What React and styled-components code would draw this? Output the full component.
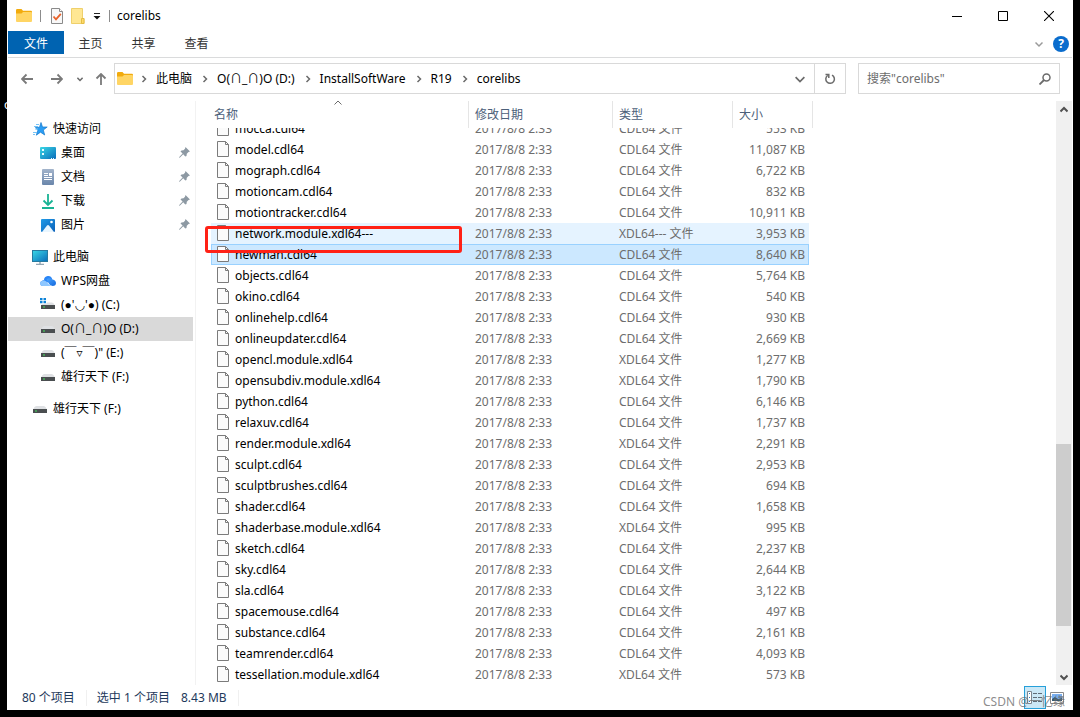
import React, { useLayoutEffect, useRef } from "react";
import styled, { createGlobalStyle, css } from "styled-components";

const files = [
  ["mocca.cdl64", "553 KB"],
  ["model.cdl64", "11,087 KB"],
  ["mograph.cdl64", "6,722 KB"],
  ["motioncam.cdl64", "832 KB"],
  ["motiontracker.cdl64", "10,911 KB"],
  ["network.module.xdl64---", "3,953 KB", "hover"],
  ["newman.cdl64", "8,640 KB", "selected"],
  ["objects.cdl64", "5,764 KB"],
  ["okino.cdl64", "540 KB"],
  ["onlinehelp.cdl64", "930 KB"],
  ["onlineupdater.cdl64", "2,669 KB"],
  ["opencl.module.xdl64", "1,277 KB"],
  ["opensubdiv.module.xdl64", "1,790 KB"],
  ["python.cdl64", "6,146 KB"],
  ["relaxuv.cdl64", "1,737 KB"],
  ["render.module.xdl64", "2,291 KB"],
  ["sculpt.cdl64", "2,953 KB"],
  ["sculptbrushes.cdl64", "694 KB"],
  ["shader.cdl64", "1,658 KB"],
  ["shaderbase.module.xdl64", "995 KB"],
  ["sketch.cdl64", "2,237 KB"],
  ["sky.cdl64", "2,644 KB"],
  ["sla.cdl64", "3,122 KB"],
  ["spacemouse.cdl64", "497 KB"],
  ["substance.cdl64", "2,161 KB"],
  ["teamrender.cdl64", "4,093 KB"],
  ["tessellation.module.xdl64", "573 KB"],
];

const fileType = (name) => `${name.split(".").pop().toUpperCase()} 文件`;

const FolderIcon = () => (
  <svg width="16" height="14" viewBox="0 0 16 14">
    <path d="M0 1.200Q0 0 1.200 0h4.300l1.500 1.800h8Q16 1.800 16 3v4H0z" fill="#f2ab0d" />
    <path d="M0 4.500h5.500L7 3h8q1 0 1 1v8q0 1-1 1H1q-1 0-1-1z" fill="#ffd564" />
  </svg>
);

const PlainFolderIcon = () => (
  <svg width="14" height="16" viewBox="0 0 14 16">
    <path d="M.5.5h11v10h1.500v5H.5z" fill="#ffe793" stroke="#efd06b" />
    <path d="M10.500 10.500h2.500v5h-2.500z" fill="#ffdc6a" stroke="#e4bd45" />
  </svg>
);

const CheckDocIcon = () => (
  <svg width="12" height="16" viewBox="0 0 12 16">
    <path d="M.5.5h8l3 3v12H.5z" fill="#f8f8f8" stroke="#8a8a8a" />
    <path d="M8.500.5v3h3" fill="#fff" stroke="#8a8a8a" />
    <path d="M2.500 8.500l2.500 2.800 4.800-5.500" fill="none" stroke="#e8622a" strokeWidth="1.800" />
  </svg>
);

const Chevron = ({ d, size = 8, color = "#6b6b6b", width = 1.5 }) => (
  <svg width={size} height={size} viewBox="0 0 8 8">
    <path d={d} fill="none" stroke={color} strokeWidth={width} />
  </svg>
);

const right = "M2.500 1l3 3-3 3";
const down = "M.5 2.500L4 6l3.500-3.500";
const up = "M.5 5.500L4 2l3.500 3.500";

const Arrow = ({ rotate = 0, color = "#7a7a7a" }) => (
  <svg width="12" height="12" viewBox="0 0 12 12">
    <path
      d="M12 6H1M5.500 1.500L1 6l4.500 4.500"
      transform={`rotate(${rotate} 6 6)`}
      fill="none"
      stroke={color}
      strokeWidth="1.800"
    />
  </svg>
);

const FileIcon = () => (
  <svg width="12" height="16" viewBox="0 0 12 16">
    <path d="M.5.5h8l3 3v12H.5z" fill="#fbfbfb" stroke="#7b7b7b" />
    <path d="M8.500.5v3h3" fill="none" stroke="#7b7b7b" />
  </svg>
);

const PinIcon = () => (
  <svg width="11" height="12" viewBox="0 0 11 12">
    <path d="M6.500 0L11 4.500l-1.500.5-1.700 1.700L7.500 9 6.300 9.500 4.200 7.300 1 10.500 0 11l.5-1.200 3.100-3.200L1.500 4.500 2.500 3.500l2-.3L6 1.700z" fill="#8d99a3" />
  </svg>
);

const Svg16 = ({ children }) => (
  <svg width="16" height="16" viewBox="0 0 16 16">
    {children}
  </svg>
);

const Gradients = () => (
  <Defs width="0" height="0">
    <defs>
      <linearGradient id="screen" x1="0" y1="0" x2="1" y2="1">
        <stop offset="0" stopColor="#3ad8e6" />
        <stop offset="1" stopColor="#0a6cba" />
      </linearGradient>
      <linearGradient id="picture" x1="0" y1="0" x2="1" y2="1">
        <stop offset="0" stopColor="#1f9be8" />
        <stop offset="1" stopColor="#0c60b8" />
      </linearGradient>
      <linearGradient id="paper" x1="0" y1="0" x2="0" y2="1">
        <stop offset="0" stopColor="#a3b4cb" />
        <stop offset="1" stopColor="#6a86ab" />
      </linearGradient>
      <linearGradient id="cloud" x1="0" y1="0" x2="1" y2="1">
        <stop offset="0" stopColor="#4aa5ff" />
        <stop offset="1" stopColor="#1468dd" />
      </linearGradient>
    </defs>
  </Defs>
);

const icons = {
  star: (
    <Svg16>
      <path d="M9 1.500l1.500 4.500h4.700L11.300 9l1.400 5-4.200-2.800-4.200 3L5.800 9.400 3.500 6.300h4z" fill="#2a9df4" stroke="#1478cc" strokeWidth=".7" />
      <path d="M4 3.500h3M2 5.500h4M3 8h3M1 11.500h4M1 13.500h2" stroke="#74c3f7" />
    </Svg16>
  ),
  desktop: (
    <Svg16>
      <rect y="2" width="16" height="12" rx="1" fill="url(#screen)" />
      <path d="M2 4h2v2H2zM2 8h2v2H2z" fill="#e8fbff" />
      <path d="M11 13h1v1h-1zM13 13h1v1h-1z" fill="#e8fbff" />
    </Svg16>
  ),
  docs: (
    <Svg16>
      <rect x="2" y="0" width="12" height="16" rx="1" fill="url(#paper)" />
      <path d="M4 4.500h4M4 6.500h4M4 8.500h8M4 10.500h8" stroke="#fff" />
      <path d="M9 4h3v3H9z" fill="#fff" />
    </Svg16>
  ),
  download: (
    <Svg16>
      <path d="M8 1v11M3.500 7.500L8 12l4.500-4.500" fill="none" stroke="#19b394" strokeWidth="1.800" />
      <path d="M2 15h12" stroke="#19b394" strokeWidth="2" />
    </Svg16>
  ),
  picture: (
    <Svg16>
      <rect x="1" y="2" width="14" height="13" rx="1" fill="url(#picture)" />
      <path d="M2 15l5-6.500q1-1 2 0L14 15z" fill="#e9f6ff" />
      <circle cx="11.500" cy="5" r="1.300" fill="#fff" />
    </Svg16>
  ),
  pc: (
    <Svg16>
      <rect x=".5" y="1.500" width="15" height="11" fill="url(#screen)" stroke="#27799f" />
      <path d="M8 13v2M4 15.500h8" stroke="#93a6b4" strokeWidth="1.500" />
    </Svg16>
  ),
  cloud: (
    <Svg16>
      <path d="M2.500 13A2.700 2.700 0 0 1 2.200 7.700Q3 7 4 7a4.200 4.200 0 0 1 8.200-1L9.500 8z" fill="#2b86f7" />
      <path d="M2.500 13Q0 12.500 0 10.300 1 7 4.500 7.500q2 .5 3.500 3 1.500 2.300 4 2.500z" fill="#8ec7ff" />
      <path d="M6.500 6.500Q9 4.500 11.500 6q4.500 1 4.500 4 0 3-3.500 3-2.500 0-4-3Q7.500 8 6.500 6.500z" fill="url(#cloud)" />
    </Svg16>
  ),
  drive: (
    <Svg16>
      <path d="M4 5h8q1.500 0 3 3.500H1Q2.500 5 4 5z" fill="#dfe1e4" />
      <rect x="1" y="8" width="14" height="4" fill="#4a4e50" />
      <path d="M3 9.500h2v1H3z" fill="#42e05b" />
    </Svg16>
  ),
  system: (
    <Svg16>
      <path d="M0 1h2.500v2.200H0zM3.500 1H6v2.200H3.500zM0 4h2.500v2.200H0zM3.500 4H6v2.200H3.500z" fill="#0b82d8" />
      <path d="M7 5.500h5q1.500 0 3 3H1L2 7h4z" fill="#dfe1e4" />
      <rect x="1" y="8" width="14" height="4" fill="#4a4e50" />
      <path d="M3 9.500h2v1H3z" fill="#42e05b" />
    </Svg16>
  ),
};

const tree = [
  [
    { icon: "star", label: "快速访问" },
    { icon: "desktop", label: "桌面", child: true, pinned: true },
    { icon: "docs", label: "文档", child: true, pinned: true },
    { icon: "download", label: "下载", child: true, pinned: true },
    { icon: "picture", label: "图片", child: true, pinned: true },
  ],
  [
    { icon: "pc", label: "此电脑" },
    { icon: "cloud", label: "WPS网盘", child: true },
    { icon: "system", label: "(●'◡'●) (C:)", child: true, symbols: true },
    { icon: "drive", label: "O(∩_∩)O (D:)", child: true, active: true },
    { icon: "drive", label: "(￣▿￣)\" (E:)", child: true, symbols: true },
    { icon: "drive", label: "雄行天下 (F:)", child: true },
  ],
  [{ icon: "drive", label: "雄行天下 (F:)" }],
];

const crumbs = ["此电脑", "O(∩_∩)O (D:)", "InstallSoftWare", "R19", "corelibs"];

const TitleBar = () => (
  <Title>
    <QuickTools>
      <FolderIcon />
      <Bar />
      <ToolButton aria-label="属性"><CheckDocIcon /></ToolButton>
      <ToolButton aria-label="新建文件夹"><PlainFolderIcon /></ToolButton>
      <ToolButton aria-label="自定义快速访问工具栏">
        <svg width="8" height="8" viewBox="0 0 8 8">
          <path d="M1 1.500h6" stroke="#222" />
          <path d="M.5 4h7L4 7.500z" fill="#111" />
        </svg>
      </ToolButton>
      <Bar />
    </QuickTools>
    <Caption>corelibs</Caption>
    <WindowButton aria-label="最小化">
      <svg width="10" height="10" viewBox="0 0 10 10"><path d="M0 5.500h10" stroke="#000" /></svg>
    </WindowButton>
    <WindowButton aria-label="最大化">
      <svg width="10" height="10" viewBox="0 0 10 10"><path d="M.5.5h9v9h-9z" fill="none" stroke="#000" /></svg>
    </WindowButton>
    <WindowButton aria-label="关闭">
      <svg width="10" height="10" viewBox="0 0 10 10"><path d="M0 0l10 10M10 0L0 10" stroke="#000" strokeWidth="1.100" /></svg>
    </WindowButton>
  </Title>
);

const Ribbon = () => (
  <Tabs>
    <Tab $primary>文件</Tab>
    <Tab>主页</Tab>
    <Tab>共享</Tab>
    <Tab>查看</Tab>
    <RibbonEnd>
      <ToolButton aria-label="展开功能区"><Chevron d={down} color="#9a9a9a" /></ToolButton>
      <HelpButton aria-label="帮助">?</HelpButton>
    </RibbonEnd>
  </Tabs>
);

const AddressRow = () => (
  <Address>
    <NavButton aria-label="后退" $width={30}><Arrow /></NavButton>
    <NavButton aria-label="前进" $width={30}><Arrow rotate={180} /></NavButton>
    <NavButton aria-label="最近浏览的位置" $width={16}>
      <Chevron d={down} size={6} width={2} />
    </NavButton>
    <NavButton aria-label="上移" $width={26}><Arrow rotate={90} /></NavButton>
    <PathBox>
      <FolderIcon />
      {crumbs.map((crumb) => (
        <Crumb key={crumb}>
          <Chevron d={right} />
          <CrumbLink href="#">{crumb}</CrumbLink>
        </Crumb>
      ))}
      <PathEnd>
        <ToolButton aria-label="以前的位置"><Chevron d={down} size={10} width={1.4} /></ToolButton>
      </PathEnd>
      <RefreshButton aria-label="刷新">
        <svg width="12" height="12" viewBox="0 0 12 12">
          <path d="M8 2.200A4.300 4.300 0 1 1 3.700 2.500M1.500 1.500h3.300v3.500" fill="none" stroke="#6b6b6b" strokeWidth="1.500" />
        </svg>
      </RefreshButton>
    </PathBox>
    <SearchBox>
      <SearchInput aria-label="搜索" placeholder={'搜索"corelibs"'} />
      <svg width="12" height="12" viewBox="0 0 12 12">
        <circle cx="7.500" cy="4.500" r="3.500" fill="none" stroke="#6b6b6b" strokeWidth="1.500" />
        <path d="M5 7L.5 11.500" stroke="#6b6b6b" strokeWidth="1.800" />
      </svg>
    </SearchBox>
  </Address>
);

const FileList = () => {
  const viewport = useRef(null);

  useLayoutEffect(() => {
    viewport.current.scrollTop = viewport.current.scrollHeight;
  }, []);

  return (
    <ListPane>
      <Viewport ref={viewport}>
        <Table>
          <colgroup>
            <col width="258" />
            <col width="144" />
            <col width="120" />
            <col width="76" />
            <col width="4" />
          </colgroup>
          <thead>
            <tr>
              <NameHead>
                名称
                <SortMark><Chevron d={up} width={1} /></SortMark>
              </NameHead>
              <Head>修改日期</Head>
              <Head>类型</Head>
              <Head colSpan={2}>大小</Head>
            </tr>
          </thead>
          <tbody>
            {files.map(([name, size, state]) => (
              <Row key={name} $state={state}>
                <Cell>
                  <FileName>
                    <FileIcon />
                    {name}
                  </FileName>
                </Cell>
                <Cell>2017/8/8 2:33</Cell>
                <Cell>{fileType(name)}</Cell>
                <Cell $end>{size}</Cell>
              </Row>
            ))}
          </tbody>
        </Table>
      </Viewport>
      <Highlight />
    </ListPane>
  );
};

const App = () => (
  <Desktop>
    <GlobalStyle />
    <Gradients />
    <DesktopLabel>o</DesktopLabel>
    <Window>
      <TitleBar />
      <Ribbon />
      <AddressRow />
      <Body>
        <Sidebar>
          {tree.map((group, i) => (
            <Group key={i}>
              {group.map((item) => (
                <Item key={item.label} href="#" $child={item.child} $active={item.active}>
                  {icons[item.icon]}
                  <ItemLabel $symbols={item.symbols}>{item.label}</ItemLabel>
                  {item.pinned && <PinIcon />}
                </Item>
              ))}
            </Group>
          ))}
        </Sidebar>
        <FileList />
        <Scrollbar>
          <ScrollButton aria-label="向上滚动"><Chevron d={up} color="#505050" width={2} /></ScrollButton>
          <ScrollSpace $grow={326} />
          <Thumb />
          <ScrollSpace $grow={42} />
          <ScrollButton aria-label="向下滚动"><Chevron d={down} color="#505050" width={2} /></ScrollButton>
        </Scrollbar>
      </Body>
      <StatusBar>
        <Status>80 个项目</Status>
        <Status>
          <span>选中 1 个项目</span>
          <span>8.43 MB</span>
        </Status>
        <Views>
          <ViewButton aria-label="详细信息" $active>
            <svg width="16" height="13" viewBox="0 0 16 13">
              <path d="M.5.5h4v12h-4z" fill="#fff" stroke="#7d8790" />
              <path d="M2 2.500h1M2 6.500h1M2 10.500h1" stroke="#2b7cc0" />
              <path d="M6 2.500h4M11 2.500h4M6 6.500h4M11 6.500h4M6 10.500h4M11 10.500h4" stroke="#5f6c77" />
            </svg>
          </ViewButton>
          <ViewButton aria-label="大图标">
            <svg width="14" height="12" viewBox="0 0 14 12">
              <path d="M.5.5h13v11H.5z" fill="#fff" stroke="#8a8a8a" />
              <path d="M2 2h10v5H2z" fill="#78aef0" />
              <path d="M2 7l3-2 3 2 4-1v3H2z" fill="#35576e" />
            </svg>
          </ViewButton>
        </Views>
      </StatusBar>
    </Window>
    <Watermark>CSDN @一忆缘</Watermark>
  </Desktop>
);

export default App;

const GlobalStyle = createGlobalStyle`
  * {
    box-sizing: border-box;
  }

  body {
    margin: 0;
    background: #000;
    font: 12px/16px "Noto Sans", "Noto Sans CJK SC", sans-serif;
    color: #000;
  }

  button,
  input {
    font: inherit;
    border: 0;
    padding: 0;
    background: none;
  }

  a {
    color: inherit;
    text-decoration: none;
  }

  svg {
    display: block;
    flex: none;
  }
`;

const Desktop = styled.div`
  position: relative;
  height: 100vh;
  padding: 0 7px 7px;
`;

const Defs = styled.svg`
  position: absolute;
`;

/* sliver of an icon caption that the window covers */
const DesktopLabel = styled.span`
  position: absolute;
  top: 97px;
  left: 4px;
  width: 3px;
  overflow: hidden;
  color: #fff;
`;

const Window = styled.main`
  display: flex;
  flex-direction: column;
  height: 100%;
  padding: 0 1px;
  background: #fff;
`;

const Title = styled.header`
  display: flex;
  align-items: center;
  height: 31px;
  padding-left: 8px;
`;

const QuickTools = styled.div`
  display: flex;
  align-items: center;
  gap: 8px;
`;

const Bar = styled.span`
  width: 1px;
  height: 12px;
  margin-right: 2px;
  background: #8c8c8c;
`;

const ToolButton = styled.button`
  display: grid;
  place-items: center;
`;

const Caption = styled.h1`
  flex: 1;
  margin: 0 0 0 5px;
  font-size: 12px;
  font-weight: 400;
`;

const WindowButton = styled.button`
  display: grid;
  place-items: center;
  width: 46px;
  height: 30px;
`;

const Tabs = styled.nav`
  display: flex;
  height: 27px;
  border-bottom: 1px solid #dadbdc;
`;

const Tab = styled.button`
  width: ${({ $primary }) => ($primary ? "56px" : "53px")};
  height: 23px;
  padding-top: 2px;
  color: ${({ $primary }) => ($primary ? "#fff" : "#333")};
  background: ${({ $primary }) => ($primary ? "#0063b1" : "none")};
`;

const RibbonEnd = styled.div`
  display: flex;
  align-items: center;
  gap: 10px;
  margin-left: auto;
  padding-right: 3px;
`;

const HelpButton = styled.button`
  width: 16px;
  height: 16px;
  border-radius: 50%;
  background: #0a6ccd;
  color: #fff;
  font-weight: 700;
`;

const Address = styled.div`
  display: flex;
  height: 43px;
  padding: 5px 12px 7px 4px;
`;

const NavButton = styled(ToolButton)`
  width: ${({ $width }) => $width}px;
`;

const PathBox = styled.div`
  display: flex;
  flex: 1;
  align-items: center;
  padding-left: 2px;
  border: 1px solid #d9d9d9;
`;

const Crumb = styled.span`
  display: flex;
  align-items: center;
  gap: 8px;
  margin-left: 7px;

  & + & {
    margin-left: 9px;
  }
`;

const CrumbLink = styled.a`
  white-space: nowrap;
`;

const PathEnd = styled.div`
  margin-left: auto;
  padding: 0 9px;
`;

const RefreshButton = styled.button`
  display: grid;
  place-items: center;
  width: 31px;
  height: 29px;
  border-left: 1px solid #d9d9d9;
`;

const SearchBox = styled.label`
  display: flex;
  align-items: center;
  width: 202px;
  margin-left: 12px;
  padding: 0 8px;
  border: 1px solid #d9d9d9;
`;

const SearchInput = styled.input`
  flex: 1;
  min-width: 0;
  outline: 0;

  &::placeholder {
    color: #6d6d6d;
  }
`;

const Body = styled.div`
  display: flex;
  flex: 1;
  min-height: 0;
`;

const Sidebar = styled.nav`
  width: 188px;
  padding: 16px 2px 0 0;
  border-right: 1px solid #f2f2f2;
`;

const Group = styled.div`
  margin-bottom: 8px;
`;

const Item = styled.a`
  display: flex;
  align-items: center;
  gap: 5px;
  height: 24px;
  padding: 0 3px 0 ${({ $child }) => ($child ? "32px" : "24px")};
  background: ${({ $active }) => ($active ? "#d9d9d9" : "none")};
`;

const ItemLabel = styled.span`
  flex: 1;
  white-space: nowrap;
  ${({ $symbols }) =>
    $symbols &&
    css`
      font-family: "Noto Sans", "Liberation Sans", "DejaVu Sans", "Noto Sans CJK SC", sans-serif;
    `}
`;

const ListPane = styled.section`
  position: relative;
  flex: 1;
  min-width: 0;
`;

const Viewport = styled.div`
  height: 100%;
  padding-left: 15px;
  overflow: hidden;
`;

const Table = styled.table`
  width: 602px;
  table-layout: fixed;
  border-spacing: 0;
`;

const Head = styled.th`
  position: sticky;
  top: 0;
  height: 27px;
  padding: 0 6px;
  border-right: 1px solid #e5e5e5;
  background: #fff;
  color: #4c607a;
  font-weight: 400;
  text-align: left;
`;

const NameHead = styled(Head)`
  padding-left: 3px;
`;

const SortMark = styled.span`
  position: absolute;
  top: -2px;
  left: 123px;
`;

const Cell = styled.td`
  height: 21px;
  padding: 0 ${({ $end }) => ($end ? "4px" : "6px")} 0 6px;
  color: #6d6d6d;
  text-align: ${({ $end }) => ($end ? "right" : "left")};
  white-space: nowrap;
`;

const Row = styled.tr`
  ${({ $state }) =>
    $state === "hover" &&
    css`
      ${Cell} {
        background: #e5f3ff;
      }
    `}

  ${({ $state }) =>
    $state === "selected" &&
    css`
      ${Cell} {
        background: #cce8ff;
        border: solid #99d1ff;
        border-width: 1px 0;
      }

      ${Cell}:first-child {
        box-shadow: inset 1px 0 #99d1ff;
      }

      ${Cell}:last-child {
        box-shadow: inset -1px 0 #99d1ff;
      }
    `}
`;

const FileName = styled.span`
  display: flex;
  align-items: flex-start;
  gap: 6px;
  color: #000;
  line-height: 17px;
`;

const Highlight = styled.div`
  position: absolute;
  top: 125px;
  left: 9px;
  width: 257px;
  height: 27px;
  border: 3px solid #ff2116;
  border-radius: 3px;
`;

const Scrollbar = styled.div`
  display: flex;
  flex-direction: column;
  width: 16px;
  background: #f0f0f0;
`;

const ScrollButton = styled.button`
  display: grid;
  place-items: center;
  height: 17px;
`;

const ScrollSpace = styled.div`
  flex: ${({ $grow }) => $grow};
`;

const Thumb = styled.div`
  flex: 182;
  margin-right: 1px;
  background: #cdcdcd;
`;

const StatusBar = styled.footer`
  display: flex;
  align-items: center;
  height: 25px;
  padding: 0 5px 0 4px;
  color: #1e395b;
`;

const Status = styled.span`
  display: flex;
  gap: 11px;
  padding: 0 11px 0 10px;
  border-right: 1px solid #f0f0f0;
`;

const Views = styled.div`
  display: flex;
  gap: 1px;
  margin-left: auto;
`;

const ViewButton = styled.button`
  display: grid;
  place-items: center;
  width: ${({ $active }) => ($active ? "22px" : "20px")};
  height: 23px;
  border: ${({ $active }) => ($active ? "1px solid #26a0da" : "0")};
  background: ${({ $active }) => ($active ? "#cbe8f6" : "none")};
`;

const Watermark = styled.span`
  position: absolute;
  right: 15px;
  bottom: 7px;
  color: rgba(110, 110, 110, 0.8);
`;
